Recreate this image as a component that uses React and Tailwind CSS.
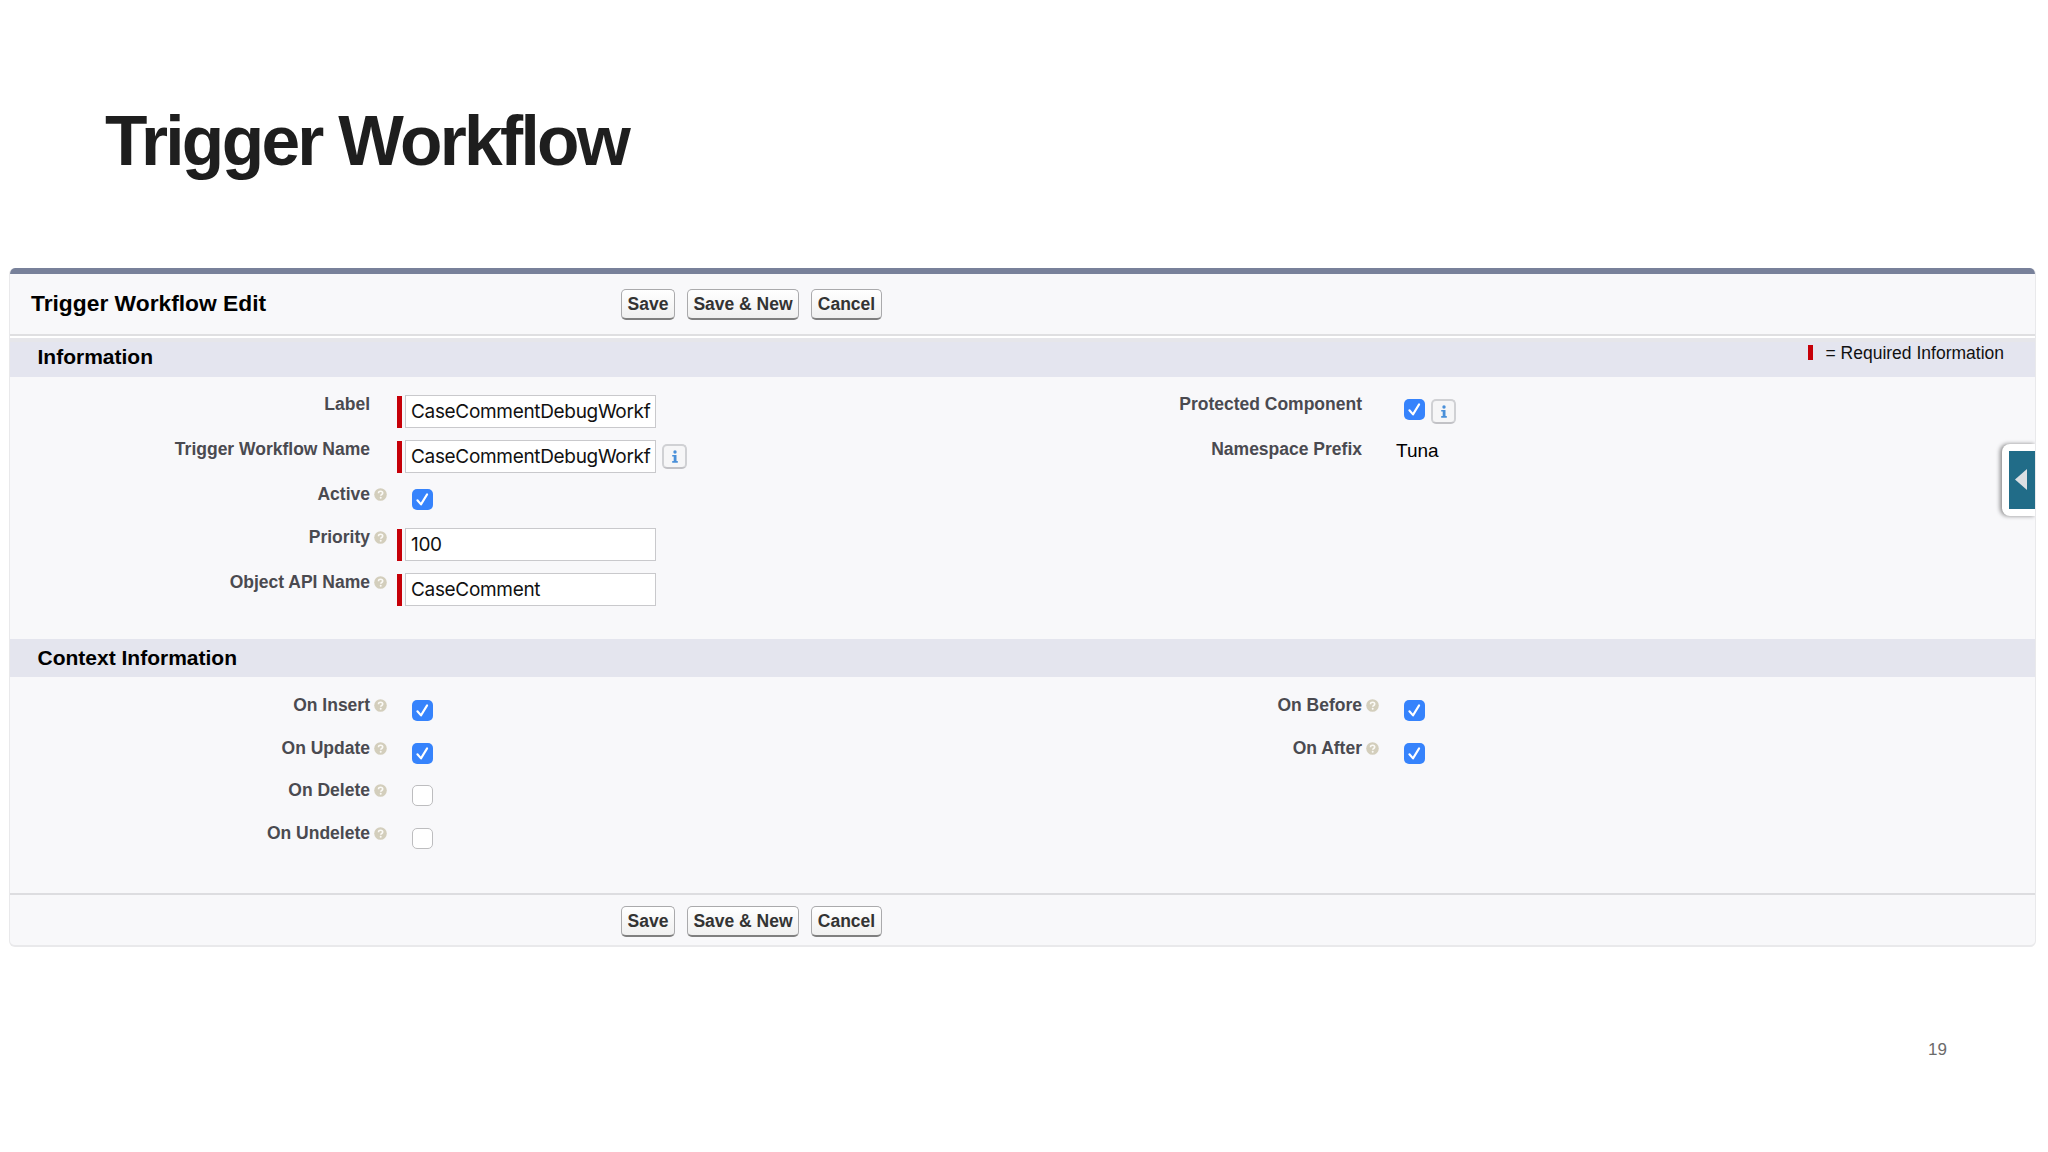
const leftInfo = [
  { label: 'Label', type: 'input', value: 'CaseCommentDebugWorkf', height: 'h-[45px]' },
  { label: 'Trigger Workflow Name', type: 'input', value: 'CaseCommentDebugWorkf', info: true, height: 'h-[45px]' },
  { label: 'Active', type: 'checkbox', checked: true, help: true, height: 'h-[42.5px]' },
  { label: 'Priority', type: 'input', value: '100', help: true, height: 'h-[45px]' },
  { label: 'Object API Name', type: 'input', value: 'CaseComment', help: true, height: 'h-[45px]' },
];

const rightInfo = [
  { label: 'Protected Component', type: 'checkbox', checked: true, info: true, height: 'h-[45px]' },
  { label: 'Namespace Prefix', type: 'text', value: 'Tuna', height: 'h-[45px]' },
];

const leftContext = [
  { label: 'On Insert', type: 'checkbox', checked: true, help: true, height: 'h-[42.5px]' },
  { label: 'On Update', type: 'checkbox', checked: true, help: true, height: 'h-[42.5px]' },
  { label: 'On Delete', type: 'checkbox', checked: false, help: true, height: 'h-[42.5px]' },
  { label: 'On Undelete', type: 'checkbox', checked: false, help: true, height: 'h-[42.5px]' },
];

const rightContext = [
  { label: 'On Before', type: 'checkbox', checked: true, help: true, height: 'h-[42.5px]' },
  { label: 'On After', type: 'checkbox', checked: true, help: true, height: 'h-[42.5px]' },
];

function HelpIcon() {
  return (
    <svg className="block h-[13px] w-[13px]" viewBox="0 0 13 13">
      <circle cx="6.5" cy="6.5" r="6.3" fill="#d3cebc" />
      <path d="M4.5 5.2c0-1.3.9-2 2.1-2s2.1.7 2.1 1.8c0 1.5-1.9 1.5-1.9 2.8" fill="none" stroke="#fbfaf6" strokeWidth="1.6" />
      <circle cx="6.7" cy="9.8" r="1" fill="#fbfaf6" />
    </svg>
  );
}

function InfoButton() {
  return (
    <span className="flex h-[25px] w-[25px] items-center justify-center rounded-[5px] border-2 border-[#d0d1d4] border-b-[#c2c2c6] bg-[#f6f6f7]">
      <svg className="h-[13px] w-[8px]" viewBox="0 0 8 13">
        <circle cx="4" cy="2" r="1.7" fill="#4a90d9" />
        <path d="M1.2 5h4.3v6h1.3v1.8H1.2V11h1.5V6.6H1.2z" fill="#4a90d9" />
      </svg>
    </span>
  );
}

function Checkbox({ checked }) {
  if (!checked) {
    return <span className="block h-[21px] w-[21px] rounded-[5px] border-[1.5px] border-[#bdbdbf] bg-white" />;
  }
  return (
    <span className="block h-[21px] w-[21px] rounded-[5px] bg-[#3683fc]">
      <svg className="block h-[21px] w-[21px]" viewBox="0 0 21 21">
        <path d="M5.4 11.3l3.6 4.1 6.1-10" fill="none" stroke="#fff" strokeWidth="2.1" strokeLinecap="round" strokeLinejoin="round" />
      </svg>
    </span>
  );
}

function Control({ field }) {
  if (field.type === 'input') {
    return (
      <div className="flex pt-[13px]">
        <span className="mt-px h-8 w-[5px] bg-[#c60008]" />
        <div className="ml-[3px] h-[33px] w-[251px] border border-[#c9c9cc] bg-white pl-[5px]">
          <div className="font-['Inter'] text-[19px] leading-[31px] tracking-[-0.32px] whitespace-nowrap text-[#111]">
            {field.value}
          </div>
        </div>
        {field.info && <div className="ml-[6px] pt-[4px]"><InfoButton /></div>}
      </div>
    );
  }
  if (field.type === 'checkbox') {
    return (
      <div className="flex pt-[17px] pl-[15px]">
        <Checkbox checked={field.checked} />
        {field.info && <div className="ml-[6px]"><InfoButton /></div>}
      </div>
    );
  }
  return <div className="pt-[12px] pl-[7px] text-[19px] leading-6 text-black">{field.value}</div>;
}

function Column({ fields }) {
  return (
    <div className="w-[992px]">
      {fields.map((field) => (
        <div key={field.label} className={`flex ${field.height}`}>
          <div className="w-[360px] pt-[12px] text-right text-[17.5px] leading-5 font-bold text-[#4a4a50]">
            {field.label}
          </div>
          <div className="w-[27px] pt-[16px] pl-[4px]">{field.help && <HelpIcon />}</div>
          <Control field={field} />
        </div>
      ))}
    </div>
  );
}

function Buttons() {
  const button =
    'h-[31px] rounded-[5px] border-[1.5px] border-[#aaaaac] border-b-2 border-b-[#7f7f7f] bg-linear-to-b from-white to-[#f0f0f0] text-center text-[17.5px] leading-[27px] font-bold text-[#333]';
  return (
    <div className="flex">
      <button className={`${button} w-[54px]`}>Save</button>
      <button className={`${button} ml-[12px] w-[112px]`}>Save &amp; New</button>
      <button className={`${button} ml-[12px] w-[71px]`}>Cancel</button>
    </div>
  );
}

export default function App() {
  return (
    <div className="h-[1152px] w-[2048px] overflow-hidden bg-white font-['Liberation_Sans',sans-serif]">
      <h1 className="h-[268px] pt-[101px] pl-[105px] text-[69.5px] leading-[80px] font-bold tracking-[-2.7px] text-[#1e1e1e]">
        Trigger Workflow
      </h1>

      <div className="relative ml-[9px] h-[679px] w-[2027px] overflow-hidden rounded-[6px] border-x border-b-2 border-[#e9e9eb] bg-[#f8f8fa]">
        <div className="h-[6px] bg-[#78819a]" />
        <div className="flex h-[60px] pt-[15px]">
          <h2 className="w-[611px] pl-[21px] text-[22.8px] leading-[29px] font-bold text-black">Trigger Workflow Edit</h2>
          <Buttons />
        </div>
        <div className="h-[4px] border-t-2 border-[#dfdfe1] bg-white" />

        <div className="flex h-[39px] justify-between border-t-4 border-[#e6e6ea] bg-[#e4e5ef] pr-[31px] pl-[27.5px]">
          <h3 className="text-[21px] leading-[29px] font-bold text-black">Information</h3>
          <div className="flex text-[17.5px] leading-[22px] text-[#111]">
            <span className="mt-[3px] mr-[12px] h-[15px] w-[5px] bg-[#c60008]" />
            = Required Information
          </div>
        </div>
        <div className="flex h-[262px] pt-[5px]">
          <Column fields={leftInfo} />
          <Column fields={rightInfo} />
        </div>

        <h3 className="h-[38px] bg-[#e4e5ee] pl-[27.5px] text-[21px] leading-[38px] font-bold text-black">
          Context Information
        </h3>
        <div className="flex h-[216px] pt-[6px]">
          <Column fields={leftContext} />
          <Column fields={rightContext} />
        </div>

        <div className="flex h-[54px] border-t-2 border-[#dddde0] pt-[11px] pl-[611px]">
          <Buttons />
        </div>

        {/* sidebar toggle */}
        <div className="absolute top-[176px] right-[-1px] h-[72px] w-[34px] rounded-l-[8px] bg-white pt-[7px] pl-[7px] shadow-[-2px_0_4px_rgba(0,0,0,0.45)]">
          <div className="h-[58px] bg-[#216c88] pt-[17px] pl-[6px]">
            <svg className="h-[24px] w-[13px]" viewBox="0 0 13 24">
              <path d="M12 1v21L0 11.5z" fill="#dcdfe3" />
            </svg>
          </div>
        </div>
      </div>

      <div className="pt-[92px] pl-[1928px] text-[17px] leading-[22px] text-[#6b6b6b]">19</div>
    </div>
  );
}
